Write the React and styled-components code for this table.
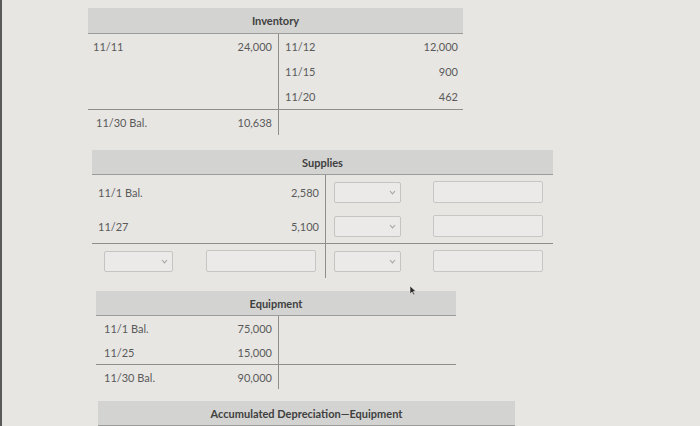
import React from 'react'
import styled, { createGlobalStyle } from 'styled-components'

const GlobalStyle = createGlobalStyle`
  html, body {
    margin: 0;
    padding: 0;
    background: #e7e6e3;
  }
  body {
    font-family: Lato, "Open Sans", sans-serif;
    color: #555;
  }
`

const Page = styled.div`
  position: relative;
  width: 700px;
  height: 426px;
  overflow: hidden;
  box-sizing: border-box;
  padding-top: 8px;
  display: flex;
  flex-direction: column;
  background: #e7e6e3;
  border-left: 2px solid #5a5a58;
`

const Account = styled.div`
  margin-left: ${p => p.left}px;
  width: ${p => p.width}px;
  margin-bottom: ${p => p.gap}px;
  flex-shrink: 0;
`

const Header = styled.div`
  height: ${p => p.h}px;
  background: #d3d3d1;
  border-bottom: 1px solid #9c9c9a;
  display: flex;
  align-items: center;
  justify-content: center;
  font-size: 11px;
  font-weight: 700;
  color: #404040;
`

const Body = styled.div`
  display: grid;
  grid-template-columns: ${p => p.split}px 1fr;
`

const Side = styled.div`
  display: flex;
  flex-direction: column;
  border-left: ${p => (p.right ? '1px solid #8e8e8c' : 'none')};
`

const Row = styled.div`
  height: ${p => p.h}px;
  display: flex;
  align-items: center;
  justify-content: space-between;
  padding: 0 ${p => p.pr}px 0 ${p => p.pl}px;
  font-size: 11px;
  color: #5a5a5a;
  border-top: ${p => (p.ruled ? '1px solid #8e8e8c' : 'none')};
`

const Amount = styled.span`
  text-align: right;
`

const SelectBox = styled.div`
  width: ${p => p.w}px;
  height: 21px;
  box-sizing: border-box;
  border: 1px solid #c4c4c2;
  border-radius: 2px;
  background: #ebeae8;
  display: flex;
  align-items: center;
  justify-content: flex-end;
  padding-right: 4px;
`

const InputBox = styled.div`
  width: ${p => p.w}px;
  height: 22px;
  box-sizing: border-box;
  border: 1px solid #c6c6c4;
  border-radius: 2px;
  background: #ebeae8;
`

const Tick = styled.div`
  height: 4px;
  border-left: 1px solid #8e8e8c;
  margin-left: ${p => p.split}px;
`

const Cursor = styled.svg`
  position: absolute;
  left: 407px;
  top: 285px;
`

const Chevron = () => (
  <svg width="7" height="5" viewBox="0 0 7 5">
    <polyline points="1,1 3.5,3.8 6,1" fill="none" stroke="#a4a4a2" strokeWidth="1.1" />
  </svg>
)

const Select = ({ w = 67 }) => (
  <SelectBox w={w}>
    <Chevron />
  </SelectBox>
)

const TAccount = ({ title, left, width, split, headerH = 25, rowH = 25, pl = 5, pr = 5, gap, leftRows, rightRows, totalLeft, totalRight }) => (
  <Account left={left} width={width} gap={gap}>
    <Header h={headerH}>{title}</Header>
    <Body split={split}>
      <Side>
        {leftRows.map((r, i) => (
          <Row key={i} h={rowH} pl={pl} pr={6}>
            {r[0]}
            <Amount>{r[1]}</Amount>
          </Row>
        ))}
      </Side>
      <Side right>
        {rightRows.map((r, i) => (
          <Row key={i} h={rowH} pl={r.pl != null ? r.pl : 6} pr={r.pr != null ? r.pr : pr}>
            {r.a}
            <Amount>{r.b}</Amount>
          </Row>
        ))}
      </Side>
      {totalLeft && (
        <Side>
          <Row h={rowH} pl={totalLeft.pl != null ? totalLeft.pl : pl} pr={totalLeft.pr != null ? totalLeft.pr : 6} ruled>
            {totalLeft.a}
            <Amount>{totalLeft.b}</Amount>
          </Row>
        </Side>
      )}
      {totalLeft && (
        <Side right>
          <Row h={rowH} pl={totalRight ? totalRight.pl : 6} pr={totalRight ? totalRight.pr : pr} ruled>
            {totalRight ? totalRight.a : null}
            {totalRight ? totalRight.b : null}
          </Row>
        </Side>
      )}
    </Body>
  </Account>
)

const App = () => (
  <Page>
    <GlobalStyle />

    <TAccount
      title="Inventory"
      left={86}
      width={375}
      split={190}
      gap={15}
      leftRows={[['11/11', '24,000'], ['', ''], ['', '']]}
      rightRows={[
        { a: '11/12', b: '12,000' },
        { a: '11/15', b: '900' },
        { a: '11/20', b: '462' },
      ]}
      totalLeft={{ a: '11/30 Bal.', b: '10,638', pl: 8 }}
    />

    <TAccount
      title="Supplies"
      left={90}
      width={461}
      split={233}
      headerH={24}
      rowH={34}
      pl={6}
      pr={10}
      gap={13}
      leftRows={[['11/1 Bal.', '2,580'], ['11/27', '5,100']]}
      rightRows={[
        { a: <Select />, b: <InputBox w={110} />, pl: 8 },
        { a: <Select />, b: <InputBox w={110} />, pl: 8 },
      ]}
      totalLeft={{ a: <Select w={69} />, b: <InputBox w={110} />, pl: 12, pr: 9 }}
      totalRight={{ a: <Select />, b: <InputBox w={110} />, pl: 8, pr: 10 }}
    />

    <TAccount
      title="Equipment"
      left={94}
      width={360}
      split={182}
      headerH={24}
      rowH={24}
      pl={8}
      gap={12}
      leftRows={[['11/1 Bal.', '75,000'], ['11/25', '15,000']]}
      rightRows={[{ a: '', b: '' }, { a: '', b: '' }]}
      totalLeft={{ a: '11/30 Bal.', b: '90,000' }}
    />

    <Account left={96} width={417} gap={0}>
      <Header h={24}>Accumulated Depreciation—Equipment</Header>
      <Tick split={210} />
    </Account>

    <Cursor width="8" height="11" viewBox="0 0 8 11">
      <path d="M1 1 L1 9 L3 7 L4.6 10 L5.8 9.4 L4.3 6.5 L7 6.5 Z" fill="#2a2a2a" stroke="#e7e6e3" strokeWidth="0.6" />
    </Cursor>
  </Page>
)

export default App
